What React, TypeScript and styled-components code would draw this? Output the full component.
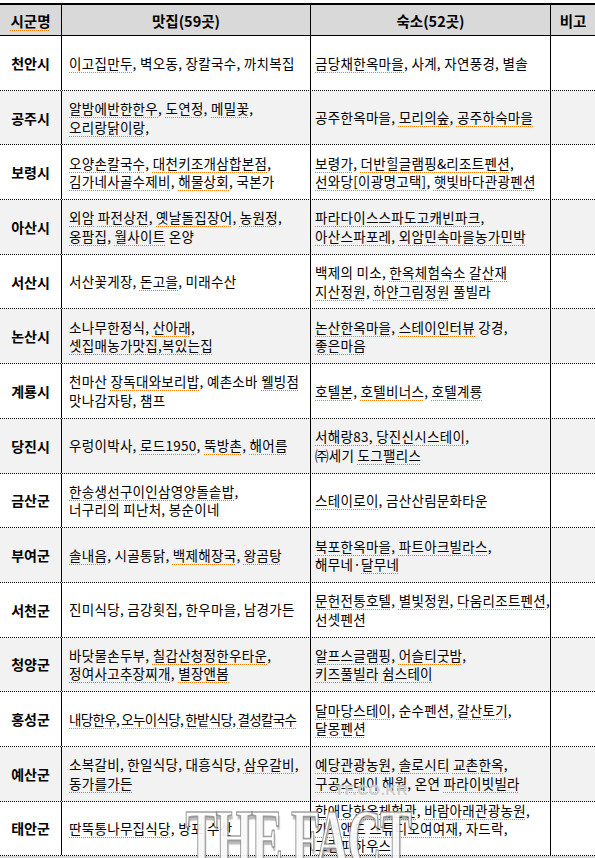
import styled, { createGlobalStyle } from 'styled-components';

const GlobalStyle = createGlobalStyle`
  html, body {
    margin: 0;
    padding: 0;
    background: #ffffff;
  }
  body {
    font-family: "Noto Sans CJK KR", "Noto Sans", sans-serif;
    color: #000;
  }
`;

const Page = styled.div`
  position: relative;
  width: 595px;
  height: 858px;
  overflow: hidden;
  padding-top: 3px;
  box-sizing: border-box;
  background: #fff;
`;

const Sheet = styled.div`
  border-top: 2px solid #000;
`;

const COLUMNS = '62px 249px 240px 1fr';

const HeaderRow = styled.div`
  display: grid;
  grid-template-columns: ${COLUMNS};
  height: 31px;
  box-sizing: border-box;
  background: #d9d9d9;
  border-bottom: 1px solid #000;
`;

const HeadCell = styled.div<{ $last?: boolean }>`
  display: flex;
  align-items: center;
  justify-content: center;
  font-size: 14.5px;
  font-weight: 700;
  border-right: ${(p) => (p.$last ? 'none' : '1px solid #000')};
`;

const DataRow = styled.div<{ $shade: boolean }>`
  display: grid;
  grid-template-columns: ${COLUMNS};
  height: 54.7px;
  box-sizing: border-box;
  background: ${(p) => (p.$shade ? '#f2f2f2' : '#ffffff')};
  border-bottom: 1px dotted #000;
`;

const CityCell = styled.div`
  display: flex;
  align-items: center;
  justify-content: center;
  font-size: 14px;
  font-weight: 700;
  border-right: 1px solid #000;
`;

const ListCell = styled.div<{ $pad: number; $tight?: boolean; $squeeze?: boolean }>`
  display: flex;
  flex-direction: column;
  justify-content: center;
  padding-left: ${(p) => p.$pad}px;
  font-size: 13.5px;
  letter-spacing: ${(p) => (p.$squeeze ? '-0.7px' : '0.3px')};
  line-height: ${(p) => (p.$tight ? '17.5px' : '18.5px')};
  border-right: 1px solid #000;
  overflow: visible;
`;

const NoteCell = styled.div``;

const Line = styled.div`
  white-space: nowrap;
`;

const Flag = styled.span`
  text-decoration: underline dotted #f57c00;
  text-decoration-thickness: 1px;
  text-underline-offset: 3px;
`;

const BottomBar = styled.div`
  height: 4px;
  background: #d6d6d6;
`;

const Watermark = styled.div`
  position: absolute;
  left: 184px;
  top: 781px;
  width: 226px;
  display: flex;
  flex-direction: column;
  align-items: flex-end;
  pointer-events: none;
`;

const WatermarkSite = styled.div`
  font-family: "Liberation Sans", Arial, sans-serif;
  font-weight: 700;
  font-size: 15px;
  letter-spacing: 0.5px;
  color: rgba(200, 200, 200, 0.9);
  text-shadow: 0 0 2px rgba(255, 255, 255, 0.9);
  margin-right: 2px;
`;

const WatermarkLogo = styled.div`
  font-family: "Liberation Serif", "Times New Roman", serif;
  font-weight: 700;
  font-size: 48px;
  letter-spacing: -2px;
  line-height: 46px;
  white-space: nowrap;
  color: rgba(255, 255, 255, 0.9);
  -webkit-text-stroke: 1px rgba(130, 130, 130, 0.75);
  text-shadow: 1px 2px 1px rgba(80, 80, 80, 0.4);
  transform: scaleY(1.7);
  transform-origin: top right;
  margin-top: 2px;
`;

type Region = {
  city: string;
  food: string[];
  stay: string[];
  squeeze?: boolean;
};

const regions: Region[] = [
  { city: '천안시', food: ['{이고집만두}, 벽오동, 장칼국수, 까치복집'], stay: ['{금당채한옥마을}, 사계, 자연풍경, 별솔'] },
  { city: '공주시', food: ['{알밤에반한한우}, {도연정}, {메밀꽃},', '{오리랑닭이랑},'], stay: ['공주한옥마을, {모리의숲}, {공주하숙마을}'] },
  { city: '보령시', food: ['{오양손칼국수}, {대천키조개삼합본점},', '{김가네사골수제비}, {해물상회}, 국본가'], stay: ['{보령가}, {더반힐글램핑&리조트펜션},', '{선와당[이광명고택]}, {햇빛바다관광펜션}'] },
  { city: '아산시', food: ['{외암} {파전상전}, {옛날돌집장어}, {농원정},', '{옹팜집}, {월사이트} 온양'], stay: ['{파라다이스스파도고캐빈파크},', '{아산스파포레}, {외암민속마을농가민박}'] },
  { city: '서산시', food: ['서산꽃게장, {돈고을}, 미래수산'], stay: ['백제의 미소, {한옥체험숙소} {갈산재}', '{지산정원}, {하얀그림정원} 풀빌라'] },
  { city: '논산시', food: ['소나무한정식, {산아래},', '{셋집매농가맛집,복있는집}'], stay: ['{논산한옥마을}, {스테이인터뷰} 강경,', '{좋은마음}'] },
  { city: '계룡시', food: ['천마산 {장독대와보리밥}, 예촌소바 {웰빙점}', '맛나감자탕, 챔프'], stay: ['{호텔본}, {호텔비너스}, {호텔계룡}'] },
  { city: '당진시', food: ['우렁이박사, {로드1950}, {뚝방촌}, {해어름}'], stay: ['{서해랑83}, {당진신시스테이},', '㈜세기 {도그팰리스}'] },
  { city: '금산군', food: ['{한송생선구이인삼영양돌솥밥},', '너구리의 피난처, 봉순이네'], stay: ['{스테이로이}, 금산산림문화타운'] },
  { city: '부여군', food: ['{솔내음}, 시골통닭, {백제해장국}, {왕곰탕}'], stay: ['{북포한옥마을}, {파트아크빌라스},', '해무네·{달무네}'] },
  { city: '서천군', food: ['진미식당, 금강횟집, 한우마을, 남경가든'], stay: ['{문헌전통호텔}, {별빛정원}, {다움리조트펜션},', '선셋펜션'] },
  { city: '청양군', food: ['바닷물손두부, {칠갑산청정한우타운},', '{정여사고추장찌개}, {별장앤봄}'], stay: ['{알프스글램핑}, {어슬티굿밤},', '{키즈풀빌라} {쉼스테이}'] },
  { city: '홍성군', food: ['{내당한우}, {오누이식당}, {한밭식당}, {결성칼국수}'], stay: ['{달마당스테이}, 순수펜션, {갈산토기},', '{달몽펜션}'], squeeze: true },
  { city: '예산군', food: ['소복갈비, 한일식당, 대흥식당, {삼우갈비},', '{동가를가든}'], stay: ['{예당관광농원}, {솔로시티} {교촌한옥},', '{구공스테이} 해월, 온연 {파라이빗빌라}'] },
  { city: '태안군', food: ['{딴뚝통나무집식당}, 방포 수산'], stay: ['{한애당한옥체험관}, {바람아래관광농원},', '{가스앤드} {스튜디오여여재}, 자드락,', '{그람피하우스}'] },
];

// {word} marks a word that carries the dotted spell-check underline
function renderMarked(text: string) {
  return text.split(/(\{[^}]*\})/).map((part, i) =>
    part.startsWith('{') ? <Flag key={i}>{part.slice(1, -1)}</Flag> : part
  );
}

function Lines({ items }: { items: string[] }) {
  return (
    <>
      {items.map((t, i) => (
        <Line key={i}>{renderMarked(t)}</Line>
      ))}
    </>
  );
}

export default function App() {
  return (
    <Page>
      <GlobalStyle />
      <Sheet>
        <HeaderRow>
          <HeadCell><Flag>시군명</Flag></HeadCell>
          <HeadCell>맛집(59곳)</HeadCell>
          <HeadCell>숙소(52곳)</HeadCell>
          <HeadCell $last>비고</HeadCell>
        </HeaderRow>
        {regions.map((r, i) => (
          <DataRow key={r.city} $shade={i % 2 === 1}>
            <CityCell>{r.city}</CityCell>
            <ListCell $pad={7} $tight={r.food.length > 2} $squeeze={r.squeeze}>
              <Lines items={r.food} />
            </ListCell>
            <ListCell $pad={4} $tight={r.stay.length > 2}>
              <Lines items={r.stay} />
            </ListCell>
            <NoteCell />
          </DataRow>
        ))}
        <BottomBar />
      </Sheet>
      <Watermark>
        <WatermarkSite>TF.CO.KR</WatermarkSite>
        <WatermarkLogo>THE FACT</WatermarkLogo>
      </Watermark>
    </Page>
  );
}
